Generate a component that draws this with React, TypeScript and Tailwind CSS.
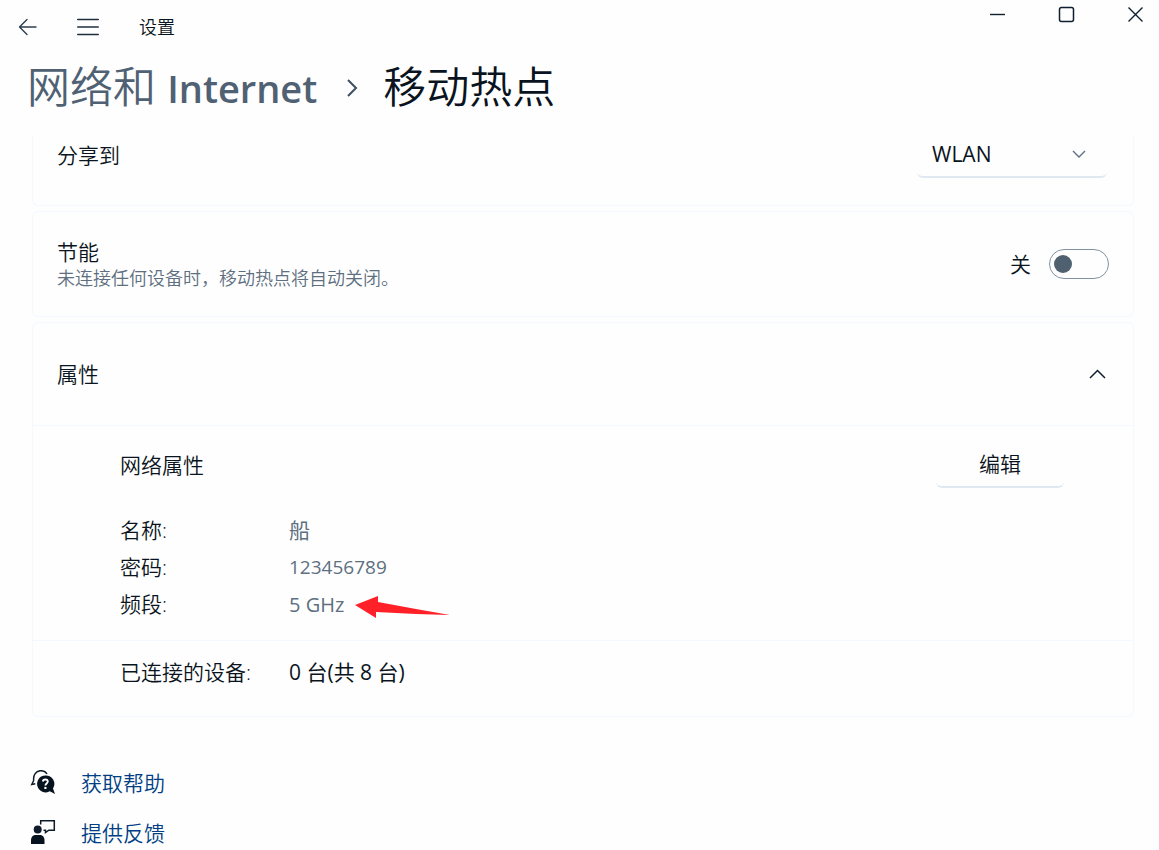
import React, { useState } from "react";

const CARD = "border-[#f3f9fe] bg-[#fefefe]";

function BackIcon() {
  return (
    <svg width="20" height="18" viewBox="0 0 20 18" fill="none" stroke="#2c3e50" strokeWidth="1.4" strokeLinecap="round" strokeLinejoin="round" aria-hidden="true">
      <path d="M18 9H1.5M9 1.5 1.5 9 9 16.5" />
    </svg>
  );
}

function MenuIcon() {
  return (
    <svg width="22" height="18" viewBox="0 0 22 18" fill="none" stroke="#1f2f40" strokeWidth="1.4" strokeLinecap="round" aria-hidden="true">
      <path d="M.7 1.5h20.6M.7 9h20.6M.7 16.5h20.6" />
    </svg>
  );
}

function HelpIcon() {
  return (
    <svg width="26" height="26" viewBox="0 1 26 26" fill="none" aria-hidden="true">
      <path d="M3.700 11.500C3 6 6 1.900 10.500 1.700c3-.1 5.200 1 6.500 3.300M3.700 11.500 1.800 15.500l3.500-.8" stroke="#0d1b2a" strokeWidth="1.500" />
      <path d="M15.400 6.400a8.500 8.500 0 1 0 4.400 15.900L25 25l-2-5.600A8.500 8.500 0 0 0 15.400 6.400Z" fill="#07121f" />
      <path d="M12.800 12.500c.2-1.300 1.200-2 2.500-2 1.500 0 2.500.8 2.500 2.100 0 1.900-2.400 1.900-2.400 4" stroke="#fff" strokeWidth="1.800" />
      <circle cx="15.400" cy="18.900" r="1.200" fill="#fff" />
    </svg>
  );
}

function FeedbackIcon() {
  return (
    <svg width="26" height="26" viewBox="0 1 26 26" fill="none" aria-hidden="true">
      <circle cx="7.700" cy="10.500" r="4" fill="#0d1b2a" />
      <path d="M1 25v-3.500C1 17.800 3 16 6 16h3.500c3 0 5 1.800 5 5.500V25Z" fill="#07121f" />
      <path d="M10.700 5.500V1.700h13.600v9.500h-5.500L15.500 13.500v-2.300H13.500" stroke="#0d1b2a" strokeWidth="1.500" />
    </svg>
  );
}

const details = [
  { term: "名称:", value: "船", size: "text-[21px]" },
  { term: "密码:", value: "123456789", size: "text-[19px]" },
  { term: "频段:", value: "5 GHz", size: "text-[20px]", marked: true },
];

export default function App() {
  const [saving, setSaving] = useState(false);
  const [open, setOpen] = useState(true);

  return (
    <div className="min-h-screen bg-[#fefefe] font-['Open_Sans','Noto_Sans_CJK_SC',sans-serif] text-[21px] leading-7 font-[350] text-[#0a1420]">
      <header className="flex items-start justify-between pl-[18px]">
        <div className="flex h-[54px] items-center">
          <button type="button" aria-label="返回"><BackIcon /></button>
          <button type="button" aria-label="菜单" className="ml-[39px]"><MenuIcon /></button>
          <span className="ml-10 text-[18px]">设置</span>
        </div>
        <div className="flex h-7 items-center gap-[52px] pr-[15px] text-[#0f1f30]">
          <button type="button" aria-label="最小化">
            <svg width="17" height="17" viewBox="0 0 17 17" stroke="currentColor" strokeWidth="1.400" aria-hidden="true"><path d="M1 8.500h15" /></svg>
          </button>
          <button type="button" aria-label="最大化">
            <svg width="17" height="17" viewBox="0 0 17 17" fill="none" stroke="currentColor" strokeWidth="1.500" aria-hidden="true"><rect x="1.500" y="1.500" width="14" height="14" rx="2" /></svg>
          </button>
          <button type="button" aria-label="关闭">
            <svg width="17" height="17" viewBox="0 0 17 17" stroke="currentColor" strokeWidth="1.400" aria-hidden="true"><path d="m1.500 1.500 14 14m0-14-14 14" /></svg>
          </button>
        </div>
      </header>

      <h1 className="flex h-[81px] items-start pl-[27px] text-[43px] leading-[66px] font-[350]">
        <a href="#network" className="text-[#4f6173]">网络和 <span className="text-[38px] font-semibold">Internet</span></a>
        <svg className="mt-6 mr-6 ml-7" width="14" height="20" viewBox="0 0 14 20" fill="none" stroke="#3c4e60" strokeWidth="2" aria-hidden="true"><path d="m3 2 8 8-8 8" /></svg>
        <span>移动热点</span>
      </h1>

      <main className="pr-[25px] pl-8">
        <section className={`flex h-[71px] items-start justify-between rounded-b-md border-x border-b pr-[26px] pl-6 ${CARD}`}>
          <label htmlFor="share" className="mt-[6px]">分享到</label>
          <div className="relative">
            <select id="share" className="h-[43px] w-[190px] appearance-none rounded-md border-b-2 border-[#e2e8f2] bg-transparent pr-10 pb-1 pl-[15px] text-[21px] font-normal">
              <option>WLAN</option>
            </select>
            <svg className="pointer-events-none absolute top-[14px] right-[21px]" width="14" height="10" viewBox="0 0 14 10" fill="none" stroke="#5d6f80" strokeWidth="1.400" aria-hidden="true"><path d="m1 2 6 6 6-6" /></svg>
          </div>
        </section>

        <section className={`mt-[5px] flex h-[106px] items-center justify-between rounded-md border pr-6 pl-6 ${CARD}`}>
          <div className="pt-0.5">
            <label htmlFor="saving" className="block leading-[26px]">节能</label>
            <p className="text-[18px] leading-[26px] text-[#5d6f80]">未连接任何设备时，移动热点将自动关闭。</p>
          </div>
          <div className="flex items-center gap-[18px]">
            <span>{saving ? "开" : "关"}</span>
            <input
              id="saving"
              type="checkbox"
              role="switch"
              checked={saving}
              onChange={(e) => setSaving(e.target.checked)}
              className="flex h-[30px] w-[60px] appearance-none items-center rounded-full border border-[#8292a2] px-1 before:size-[18px] before:rounded-full before:bg-[#4f6070] checked:justify-end"
            />
          </div>
        </section>

        <section className={`mt-[5px] rounded-md border ${CARD}`}>
          <h2>
            <button type="button" aria-expanded={open} onClick={() => setOpen(!open)} className="flex h-[102px] w-full items-center justify-between pr-[27px] pl-6">
              属性
              <svg className={open ? "" : "rotate-180"} width="17" height="10" viewBox="0 0 17 10" fill="none" stroke="#101f30" strokeWidth="1.500" aria-hidden="true"><path d="m1 9 7.500-7.500L16 9" /></svg>
            </button>
          </h2>
          {open && (
            <>
              <div className="h-[215px] border-t border-[#f3f9fe] pt-4 pr-[69px] pl-[87px]">
                <div className="flex items-center justify-between">
                  <h3>网络属性</h3>
                  <button type="button" className="h-[46px] w-32 rounded-md border-b-2 border-[#e2e8f2]">编辑</button>
                </div>
                <dl className="mt-6 grid grid-cols-[169px_1fr] leading-[37px]">
                  {details.map(({ term, value, size, marked }) => (
                    <React.Fragment key={term}>
                      <dt>{term}</dt>
                      <dd className={`flex items-center font-normal text-[#5d6f80] ${size}`}>
                        {value}
                        {marked && (
                          <svg className="mt-1 ml-2.5" width="98" height="24" viewBox="0 0 98 24" fill="#ff2028" aria-hidden="true">
                            <path d="M1 10 24 1v6l38 7 34 6-34-1-40-2v6Z" />
                          </svg>
                        )}
                      </dd>
                    </React.Fragment>
                  ))}
                </dl>
              </div>
              <dl className="grid h-[76px] grid-cols-[169px_1fr] border-t border-[#f3f9fe] pt-[17px] pl-[87px]">
                <dt>已连接的设备:</dt>
                <dd className="font-normal">0 台(共 8 台)</dd>
              </dl>
            </>
          )}
        </section>

        <nav className="mt-[41px] -ml-0.5 flex flex-col text-[#003e85]">
          <a href="#help" className="flex h-[50px] items-center gap-[25px]"><HelpIcon />获取帮助</a>
          <a href="#feedback" className="flex h-[50px] items-center gap-[25px]"><FeedbackIcon />提供反馈</a>
        </nav>
      </main>
    </div>
  );
}
